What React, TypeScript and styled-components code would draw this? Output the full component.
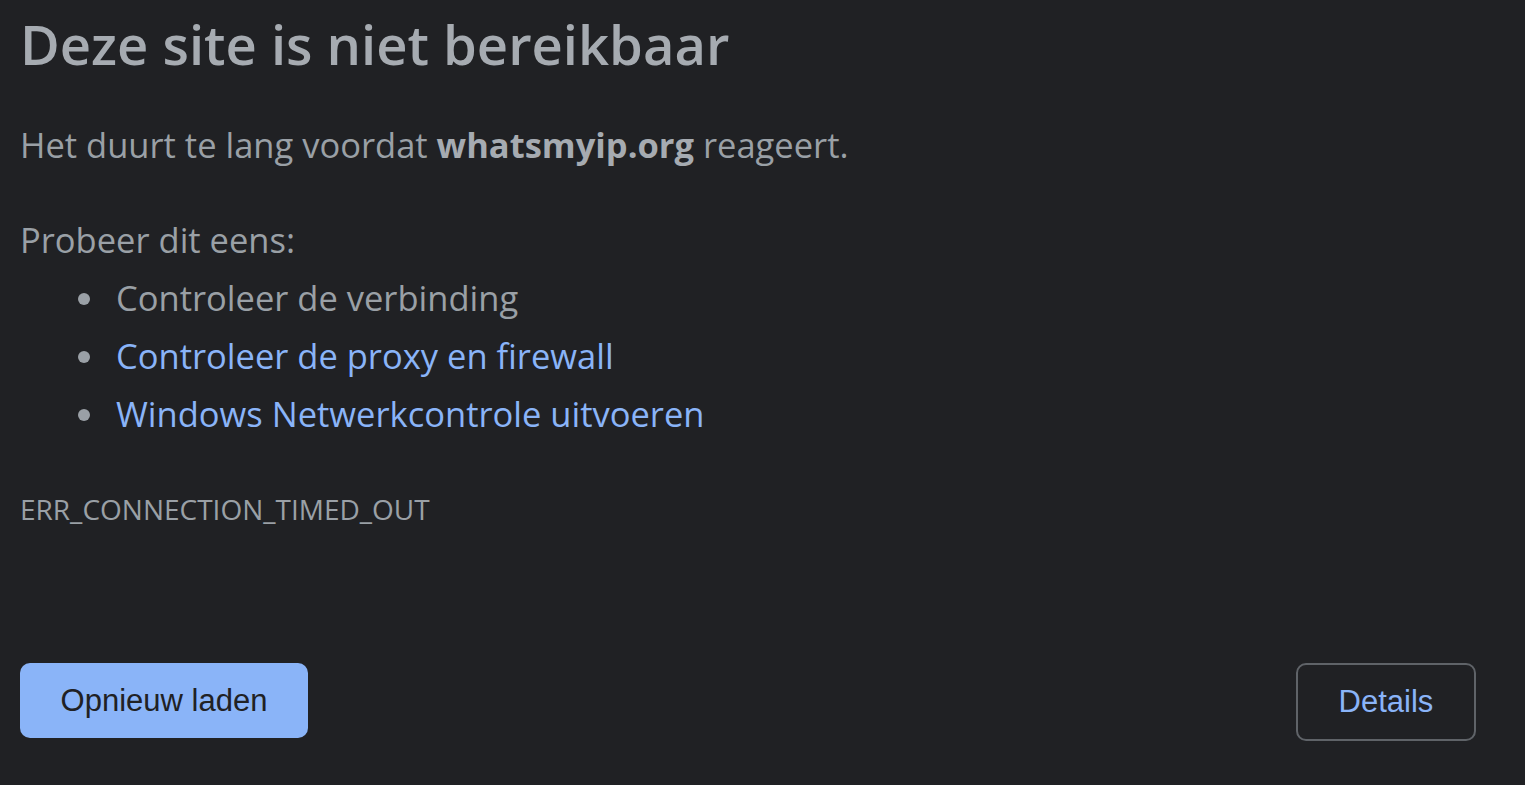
import React from 'react';
import styled, { createGlobalStyle } from 'styled-components';

const GlobalStyle = createGlobalStyle`
  html, body {
    margin: 0;
    padding: 0;
    background: #202124;
  }
  body {
    font-family: 'Open Sans', 'Noto Sans', sans-serif;
    color: #9aa0a6;
  }
`;

const Page = styled.main`
  height: 785px;
  box-sizing: border-box;
  padding: 0 49px 0 20px;
  display: flex;
  flex-direction: column;
  overflow: hidden;
`;

const Title = styled.h1`
  margin: 0;
  padding-top: 9px;
  font-size: 54.3px;
  line-height: 70px;
  font-weight: 600;
  color: #a6abb1;
`;

const Paragraph = styled.p<{ gap?: number }>`
  margin: ${({ gap }) => gap ?? 0}px 0 0;
  font-size: 34.5px;
  line-height: 58px;
  color: #9aa0a6;

  strong {
    font-weight: 700;
    color: #a6abb1;
  }
`;

const Suggestions = styled.ul`
  margin: 0;
  padding: 0 0 0 96px;
  list-style: none;
`;

const Suggestion = styled.li<{ link?: boolean }>`
  position: relative;
  font-size: 34.5px;
  line-height: 58px;
  color: ${({ link }) => (link ? '#8ab4f8' : '#9aa0a6')};

  &::before {
    content: '';
    position: absolute;
    left: -38px;
    top: 24px;
    width: 12px;
    height: 12px;
    border-radius: 50%;
    background: #9aa0a6;
  }
`;

const ErrorCode = styled.div`
  margin-top: 46px;
  font-size: 28px;
  line-height: 40px;
  color: #9aa0a6;
`;

const Actions = styled.div`
  margin-top: auto;
  margin-bottom: 44px;
  display: flex;
  justify-content: space-between;
  align-items: flex-start;
`;

const PrimaryButton = styled.button`
  width: 288px;
  height: 75px;
  border: none;
  border-radius: 10px;
  background: #8ab4f8;
  color: #202124;
  font-family: 'Liberation Sans', Arial, sans-serif;
  font-size: 31px;
  cursor: pointer;
`;

const SecondaryButton = styled.button`
  width: 180px;
  height: 78px;
  border: 2px solid #5f6368;
  border-radius: 10px;
  background: transparent;
  color: #8ab4f8;
  font-family: 'Liberation Sans', Arial, sans-serif;
  font-size: 31px;
  cursor: pointer;
`;

export default function App() {
  return (
    <>
      <GlobalStyle />
      <Page>
        <Title>Deze site is niet bereikbaar</Title>
        <Paragraph gap={37}>
          Het duurt te lang voordat <strong>whatsmyip.org</strong> reageert.
        </Paragraph>
        <Paragraph gap={37}>Probeer dit eens:</Paragraph>
        <Suggestions>
          <Suggestion>Controleer de verbinding</Suggestion>
          <Suggestion link>Controleer de proxy en firewall</Suggestion>
          <Suggestion link>Windows Netwerkcontrole uitvoeren</Suggestion>
        </Suggestions>
        <ErrorCode>ERR_CONNECTION_TIMED_OUT</ErrorCode>
        <Actions>
          <PrimaryButton>Opnieuw laden</PrimaryButton>
          <SecondaryButton>Details</SecondaryButton>
        </Actions>
      </Page>
    </>
  );
}
